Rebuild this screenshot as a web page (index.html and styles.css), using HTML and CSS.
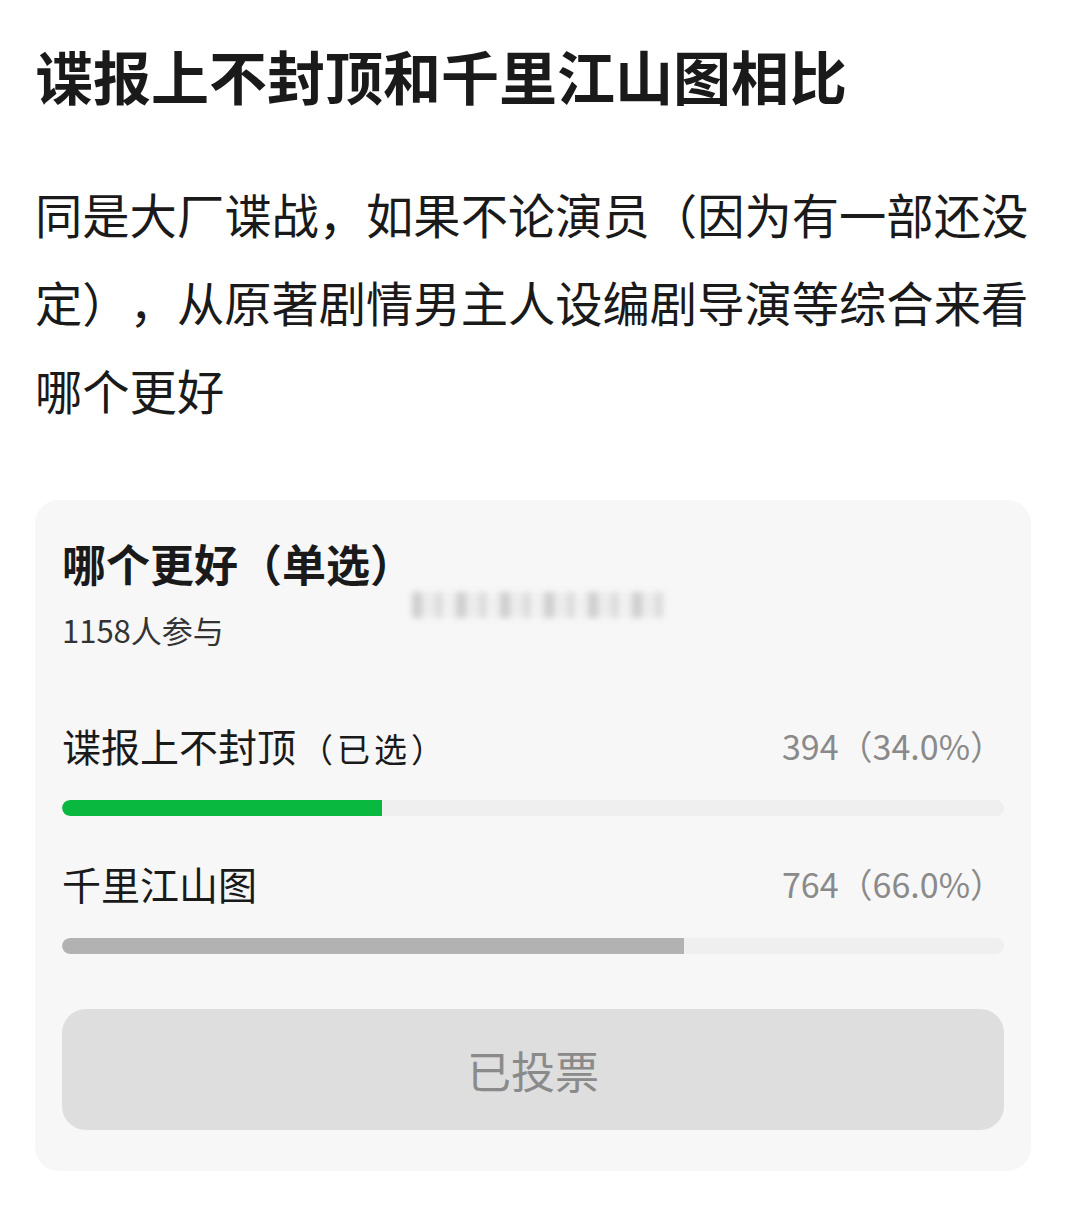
FILE: index.html
```html
<!DOCTYPE html>
<html lang="zh-CN">
<head>
    <meta charset="UTF-8">
    <meta name="viewport" content="width=device-width, initial-scale=1.0">
    <title>谍报上不封顶和千里江山图相比</title>
    <link rel="stylesheet" href="styles.css">
</head>
<body>
    <h1 class="post-title">谍报上不封顶和千里江山图相比</h1>
    <p class="post-body">同是大厂谍战，如果不论演员（因为有一部还没定），从原著剧情男主人设编剧导演等综合来看哪个更好</p>

    <div class="vote-card">
        <div class="vote-head">
            <h2 class="vote-title">哪个更好（单选）</h2>
            <div class="vote-count">1158人参与</div>
            <div class="vote-blur"></div>
        </div>

        <div class="option">
            <div class="option-row">
                <span class="option-name">谍报上不封顶<span class="option-mine">（已选）</span></span>
                <span class="option-value">394（34.0%）</span>
            </div>
            <div class="bar"><div class="bar-fill bar-chosen" style="width: 34%"></div></div>
        </div>

        <div class="option">
            <div class="option-row">
                <span class="option-name">千里江山图</span>
                <span class="option-value">764（66.0%）</span>
            </div>
            <div class="bar"><div class="bar-fill" style="width: 66%"></div></div>
        </div>

        <button class="vote-button" disabled>已投票</button>
    </div>
</body>
</html>
```

FILE: styles.css
```css
:root {
    --text-dark: #1a1a1a;
    --text-gray: #8a8a8a;
    --card-bg: #f7f7f7;
    --track: #efefef;
    --green: #09b83e;
    --gray-fill: #b2b2b2;
    --button-bg: #dedede;
}

body {
    font-family: "Noto Sans CJK SC", "Noto Sans", sans-serif;
    background-color: #fff;
    color: var(--text-dark);
    margin: 0;
    padding: 0 41px 40px 35px;
    text-spacing-trim: space-all;
}

.post-title {
    margin: 35px 0 0;
    font-size: 58px;
    line-height: 80px;
    font-weight: 700;
}

.post-body {
    margin: 55px 0 0;
    font-size: 47.3px;
    line-height: 88px;
}

.vote-card {
    margin-top: 66px;
    background-color: var(--card-bg);
    border-radius: 24px;
    padding: 34px 27px 41px;
}

.vote-head {
    position: relative;
}

.vote-title {
    margin: 0;
    font-size: 44px;
    line-height: 58px;
    font-weight: 700;
}

.vote-count {
    margin-top: 16px;
    font-size: 31px;
    line-height: 44px;
    color: #333;
}

.vote-blur {
    position: absolute;
    left: 350px;
    top: 58px;
    width: 255px;
    height: 26px;
    background: repeating-linear-gradient(90deg, #c4c4c4 0 10px, #eaeaea 10px 24px, #d0d0d0 24px 30px, #f0f0f0 30px 44px);
    filter: blur(3px);
    opacity: 0.8;
}

.option {
    margin-top: 67px;
}

.option + .option {
    margin-top: 41px;
}

.option-row {
    display: flex;
    justify-content: space-between;
    align-items: center;
    height: 52px;
}

.option-name {
    font-size: 39px;
}

.option-mine {
    font-size: 33px;
    letter-spacing: 4px;
    margin-left: 4px;
}

.option-value {
    font-size: 34px;
    color: var(--text-gray);
}

.bar {
    margin-top: 29px;
    height: 16px;
    border-radius: 8px;
    background-color: var(--track);
    overflow: hidden;
}

.bar-fill {
    height: 100%;
    background-color: var(--gray-fill);
    border-radius: 8px 0 0 8px;
}

.bar-chosen {
    background-color: var(--green);
}

.vote-button {
    display: block;
    width: 100%;
    height: 121px;
    margin-top: 55px;
    border: none;
    border-radius: 24px;
    background-color: var(--button-bg);
    color: var(--text-gray);
    font-family: inherit;
    font-size: 44px;
}
```
